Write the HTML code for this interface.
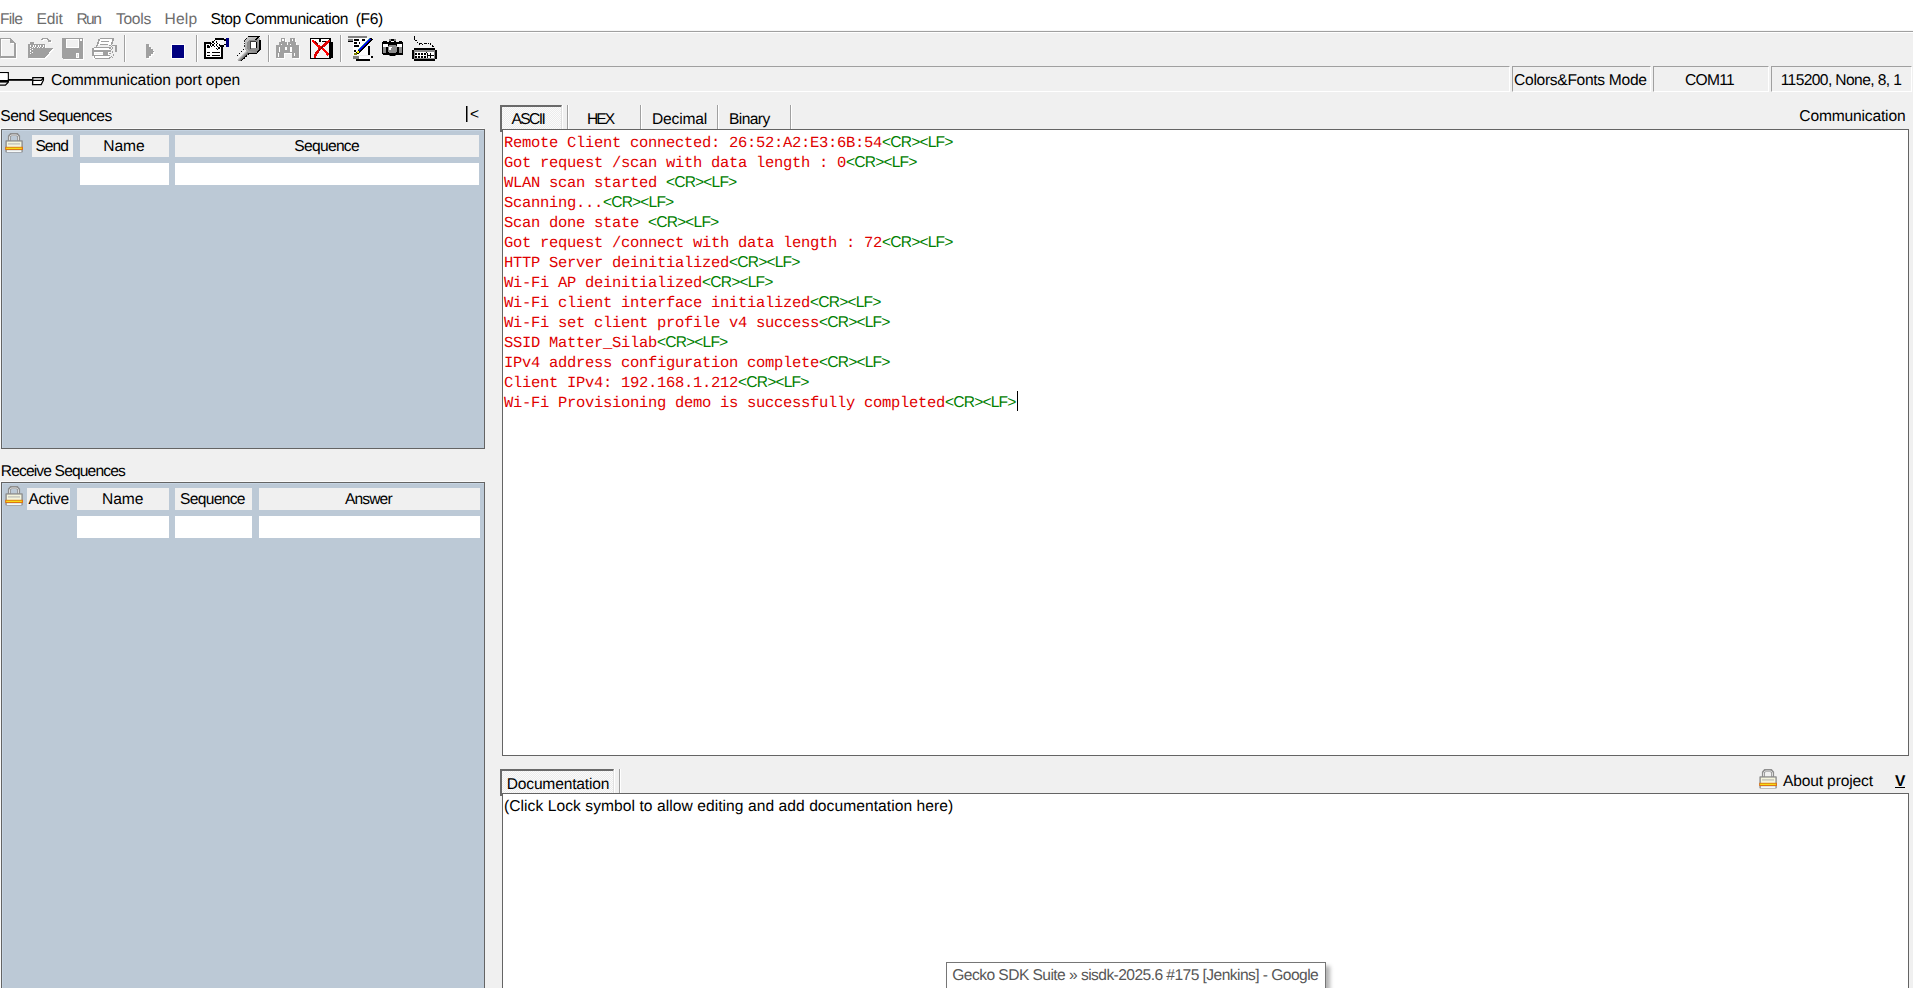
<!DOCTYPE html>
<html><head><meta charset="utf-8">
<style>
html,body{margin:0;padding:0;}
body{width:1913px;height:988px;overflow:hidden;background:#f0f0f0;position:relative;font-family:"Liberation Sans",sans-serif;}
.a{position:absolute;}
.t{position:absolute;white-space:pre;font-size:15.6px;line-height:16px;color:#000;text-rendering:geometricPrecision;}
.box{position:absolute;box-sizing:border-box;}
.mono{position:absolute;left:504px;white-space:pre;font-family:"Liberation Mono",monospace;font-size:15.5px;letter-spacing:-0.3px;line-height:20px;color:#e00000;text-rendering:geometricPrecision;}
.mono span{font-family:"Liberation Sans",sans-serif;font-size:15.6px;letter-spacing:-0.85px;color:#008000;}
</style></head><body>
<div class="a" style="left:0;top:0;width:1913px;height:30px;background:#fff"></div>
<div class="a" style="left:0;top:30px;width:1913px;height:1px;background:#f7f7f7"></div>
<div class="a" style="left:0;top:31px;width:1913px;height:1px;background:#a0a0a0"></div>
<div class="a" style="left:0;top:32px;width:1913px;height:1px;background:#fff"></div>
<svg class="a" style="left:0;top:0" width="450" height="66" shape-rendering="crispEdges"><g transform="translate(1,1)" fill="#fff" stroke="#fff"><path d="M0.6,38.6H10.6L15.1,43.1V57.1H0.6Z" fill="none" stroke-width="1.3"/><path d="M10.3,38.3V43.4H15.4Z" stroke="none"/></g><g fill="#a0a0a0" stroke="#a0a0a0"><path d="M0.6,38.6H10.6L15.1,43.1V57.1H0.6Z" fill="none" stroke-width="1.3"/><path d="M10.3,38.3V43.4H15.4Z" stroke="none"/></g><g transform="translate(1,1)" fill="#fff" stroke="#fff"><path d="M28,44H30.2V42.2H34V44H45V48H53L45.2,57.8H28Z" stroke="none"/><path d="M41.2,40.2L42.8,38.6H47.2L50,41.4" fill="none" stroke-width="1.3"/><path d="M48.2,41.8H51.4V38.8Z" stroke="none"/></g><g fill="#a0a0a0" stroke="#a0a0a0"><path d="M28,44H30.2V42.2H34V44H45V48H53L45.2,57.8H28Z" stroke="none"/><path d="M41.2,40.2L42.8,38.6H47.2L50,41.4" fill="none" stroke-width="1.3"/><path d="M48.2,41.8H51.4V38.8Z" stroke="none"/></g><g fill="#fff"><rect x="30.2" y="45.4" width="1.25" height="1.25"/><rect x="32.7" y="45.4" width="1.25" height="1.25"/><rect x="35.2" y="45.4" width="1.25" height="1.25"/><rect x="37.7" y="45.4" width="1.25" height="1.25"/><rect x="40.2" y="45.4" width="1.25" height="1.25"/><rect x="42.7" y="45.4" width="1.25" height="1.25"/><rect x="31.5" y="46.7" width="1.25" height="1.25"/><rect x="34.0" y="46.7" width="1.25" height="1.25"/><rect x="36.5" y="46.7" width="1.25" height="1.25"/><rect x="39.0" y="46.7" width="1.25" height="1.25"/><rect x="41.5" y="46.7" width="1.25" height="1.25"/><rect x="30.2" y="47.9" width="1.25" height="1.25"/><rect x="30.2" y="50.4" width="1.25" height="1.25"/><rect x="30.2" y="52.9" width="1.25" height="1.25"/><rect x="31.5" y="49.2" width="1.25" height="1.25"/><rect x="31.5" y="51.7" width="1.25" height="1.25"/></g><g transform="translate(1,1)" fill="#fff" stroke="#fff"><path d="M62,38H83V58.8H63.2L62,57.6Z" stroke="none"/></g><g fill="#a0a0a0" stroke="#a0a0a0"><path d="M62,38H83V58.8H63.2L62,57.6Z" stroke="none"/></g><rect x="66.6" y="39.6" width="11.8" height="8" fill="#f0f0f0" stroke="#fff" stroke-width="1.3"/><rect x="80" y="39" width="2" height="2" fill="#fff"/><rect x="76.1" y="52.9" width="3" height="5" fill="#fff"/><rect x="77.4" y="54" width="0.8" height="3" fill="#ddd"/><g fill="#fff"><path d="M99.6,38.6H114.4L112,45.4H96.4Z"/><rect x="93.4" y="47.6" width="16.4" height="11.6"/></g><g fill="#a0a0a0"><rect x="100.1" y="38" width="13.8" height="1.2"/><path d="M98.6,39.2H100.1L97.2,47.2H95.6Z"/><path d="M112.6,39.2H114L112,45H110.6Z"/><rect x="101.1" y="41" width="7.7" height="1"/><rect x="100.1" y="43.9" width="7.7" height="1"/><rect x="92.1" y="47.6" width="1.7" height="8.1"/><rect x="93.8" y="47" width="15.4" height="1.2"/><rect x="93.8" y="50" width="15.4" height="1.7"/><rect x="103" y="51.7" width="4.8" height="3.2"/><rect x="93.8" y="54.9" width="16" height="1"/><rect x="94.1" y="56" width="1" height="2"/><rect x="94.8" y="58" width="15" height="1"/><rect x="109.2" y="44.6" width="1.4" height="1.4"/><rect x="111.8" y="44.6" width="1.4" height="1.4"/><rect x="110.5" y="46" width="1.4" height="1.4"/><rect x="109.2" y="47.4" width="1.4" height="1.4"/><rect x="111.8" y="47.4" width="1.4" height="1.4"/><rect x="110.5" y="48.8" width="1.4" height="1.4"/><rect x="109.2" y="50.2" width="1.4" height="1.4"/><rect x="111.8" y="51.2" width="1.4" height="1.4"/><rect x="109.2" y="53" width="1.4" height="1.4"/><rect x="110.5" y="55.6" width="1.4" height="1.4"/><rect x="109.2" y="57" width="1.4" height="1.4"/><rect x="111.8" y="57" width="1.4" height="1.4"/><rect x="112.6" y="53.6" width="1.4" height="2"/><rect x="115.2" y="45.2" width="1.7" height="6.4"/><rect x="113.4" y="45.2" width="1.8" height="1"/></g><g fill="#f0f0f0"><rect x="94.6" y="52.6" width="8" height="1.6"/></g><rect x="124" y="35" width="1" height="27" fill="#a0a0a0"/><rect x="125" y="35" width="1" height="27" fill="#fff"/><rect x="196" y="35" width="1" height="27" fill="#a0a0a0"/><rect x="197" y="35" width="1" height="27" fill="#fff"/><rect x="268" y="35" width="1" height="27" fill="#a0a0a0"/><rect x="269" y="35" width="1" height="27" fill="#fff"/><rect x="340" y="35" width="1" height="27" fill="#a0a0a0"/><rect x="341" y="35" width="1" height="27" fill="#fff"/><g transform="translate(1,1)" fill="#fff" stroke="#fff"><path d="M146,44H148.5V46.5H151V49H153V50.5H154V52H153V53.5H151V55.5H148.5V58H146Z" stroke="none"/></g><g fill="#a0a0a0" stroke="#a0a0a0"><path d="M146,44H148.5V46.5H151V49H153V50.5H154V52H153V53.5H151V55.5H148.5V58H146Z" stroke="none"/></g><rect x="171" y="44" width="14" height="15" fill="#fff"/><rect x="172" y="45" width="12" height="13" fill="#000080"/><rect x="204" y="42" width="19" height="17" fill="#000"/><rect x="205.9" y="43.9" width="15.2" height="13.2" fill="#fff"/><path d="M215.2,39H224.2V44.6H220.4V42H211.6L213.4,39.4Z" fill="#f8f8f8"/><rect x="211.4" y="42" width="9" height="2" fill="#fff"/><g fill="#000"><rect x="207" y="52" width="3" height="1.3"/><rect x="212" y="52" width="8" height="1.3"/><rect x="207" y="55" width="3" height="1.3"/><rect x="212" y="55" width="8" height="1.3"/><rect x="207" y="45.2" width="2" height="2.6"/><rect x="209" y="46.4" width="1.2" height="1.4"/><rect x="215.2" y="38.2" width="8.6" height="1.3"/><rect x="224.2" y="39.2" width="2" height="1.6"/><rect x="224.2" y="44" width="2" height="1"/><rect x="220.4" y="44.9" width="3.8" height="1.6"/><rect x="214.0" y="39.6" width="1.4" height="1.4"/><rect x="212.4" y="41.2" width="1.4" height="1.4"/><rect x="215.6" y="41.2" width="1.4" height="1.4"/><rect x="211.0" y="42.8" width="1.4" height="1.4"/><rect x="214.0" y="42.8" width="1.4" height="1.4"/><rect x="217.0" y="42.8" width="1.4" height="1.4"/><rect x="209.6" y="44.4" width="1.4" height="1.4"/><rect x="212.4" y="44.4" width="1.4" height="1.4"/><rect x="215.6" y="44.4" width="1.4" height="1.4"/><rect x="218.6" y="44.4" width="1.4" height="1.4"/><rect x="211.0" y="46.0" width="1.4" height="1.4"/><rect x="214.0" y="46.0" width="1.4" height="1.4"/><rect x="217.0" y="46.0" width="1.4" height="1.4"/><rect x="215.6" y="47.6" width="1.4" height="1.4"/><rect x="218.4" y="47.2" width="1.4" height="1.4"/><rect x="216.8" y="48.8" width="1.4" height="1.4"/></g><rect x="226.2" y="38.2" width="2.6" height="8.6" fill="#000080"/><defs><linearGradient id="wg" gradientUnits="userSpaceOnUse" x1="241" y1="50" x2="246" y2="55"><stop offset="0" stop-color="#8a8a8a"/><stop offset="0.5" stop-color="#f8f8f8"/><stop offset="1" stop-color="#6a6a6a"/></linearGradient><linearGradient id="wh" gradientUnits="userSpaceOnUse" x1="246" y1="38" x2="260" y2="53"><stop offset="0" stop-color="#c8c8c8"/><stop offset="0.5" stop-color="#a8a8a8"/><stop offset="1" stop-color="#787878"/></linearGradient></defs><path d="M236.4,59.6L247.4,48.6L251.2,52.4L240.2,61.4Z" fill="url(#wg)"/><path d="M244.8,40.2L248.2,36.8H258.6L260.4,39.2V49.8L256.8,53.6H249.2L244.8,49.2Z" fill="url(#wh)"/><path d="M247.2,42L249.6,39.6H256.8L258.4,41.4V48.8L256,51.2H249.8L247.2,48.6Z" fill="#8c8c8c"/><rect x="251.2" y="41.8" width="4.8" height="6.6" fill="#fff"/><path d="M250.6,48.6V41.6H256.4" fill="none" stroke="#3c3c3c" stroke-width="1.2"/><path d="M256.6,41.8V47.8" fill="none" stroke="#000" stroke-width="1.2"/><path d="M248.2,36.6H258.8L255.4,40.2" fill="none" stroke="#000" stroke-width="1.3"/><path d="M244.6,40.2L248,36.8" fill="none" stroke="#000" stroke-width="0.9" stroke-dasharray="1.2,1"/><path d="M259.9,40V49.8L256.6,53.4H249.4" fill="none" stroke="#000" stroke-width="1.3"/><path d="M244.5,40.4V48" fill="none" stroke="#000" stroke-width="0.8" stroke-dasharray="1.4,1"/><path d="M244,48.8L236.4,56.4" fill="none" stroke="#000" stroke-width="1" stroke-dasharray="1.4,1.4"/><path d="M249.4,53.6L240.8,61" fill="none" stroke="#000" stroke-width="1.3" stroke-dasharray="2,1"/><g transform="translate(1,1)" fill="#fff" stroke="#fff"><path d="M281.1,38.2H284.9V42.2H286.8V45.3H288.2V42.2H290.3V38.2H294.8V42.2H295.8V45.3H298.7V57.7H292.4V52.8H283.7V57.7H276.1V45.3H279.1V42.2H281.1Z" stroke="none"/></g><g fill="#a0a0a0" stroke="#a0a0a0"><path d="M281.1,38.2H284.9V42.2H286.8V45.3H288.2V42.2H290.3V38.2H294.8V42.2H295.8V45.3H298.7V57.7H292.4V52.8H283.7V57.7H276.1V45.3H279.1V42.2H281.1Z" stroke="none"/></g><g fill="#fff"><rect x="282.4" y="39.4" width="1.4" height="1.6"/><rect x="291.6" y="39.4" width="1.6" height="1.6"/><rect x="278.6" y="47.2" width="1.6" height="4.6"/><rect x="285" y="47" width="1.6" height="2.8"/><rect x="290" y="47.2" width="1.6" height="4.6"/><rect x="277.8" y="53.4" width="1.2" height="3.6"/><rect x="293.6" y="53.4" width="1.6" height="2.4"/><rect x="280.8" y="43.6" width="1.2" height="1.2"/><rect x="289.6" y="43.6" width="1.4" height="1"/></g><rect x="310.6" y="38.8" width="19.4" height="19.4" fill="#f4f4f4" stroke="#000" stroke-width="1.3"/><rect x="330.4" y="42.4" width="2.4" height="15.4" fill="#000"/><rect x="311.4" y="39.4" width="18" height="3" fill="#fff"/><rect x="319.2" y="38.8" width="1.4" height="3" fill="#000"/><rect x="322.2" y="40.8" width="5" height="1.6" fill="#000"/><path d="M312.2,40.2L319.6,47.2L321.6,47.4L326.4,52.6L328.6,55.4" fill="none" stroke="#f00" stroke-width="2.4"/><path d="M329.8,40.4L323.4,45.8L320,48.4L317.6,51.6L315.4,54.6L315,58" fill="none" stroke="#e00000" stroke-width="2.6"/><path d="M314.6,41.6L318.2,44.6M321,48.4L323,46.4M318.6,50.4L320,49.2" fill="none" stroke="#800000" stroke-width="1.4"/><rect x="348" y="36.3" width="18.8" height="1.6" fill="#808080"/><rect x="348" y="39" width="4.8" height="1.6" fill="#808080"/><rect x="348" y="40.5" width="4.8" height="1.3" fill="#000"/><path d="M352.8,37.9H367.2L369.6,40V55.3H352.8Z" fill="#fff"/><rect x="368.1" y="46" width="1.5" height="9.3" fill="#000"/><g fill="#000"><rect x="354" y="39" width="4.8" height="1.5"/><rect x="362" y="39" width="3" height="1.5"/><rect x="354" y="42.3" width="3" height="1.5"/><rect x="359.2" y="42.3" width="0.9" height="1.5"/><rect x="354" y="45.3" width="4.8" height="1.5"/><rect x="354" y="50.3" width="2" height="1.5"/></g><path d="M357.2,53.4L371.8,38.8" stroke="#000" stroke-width="2.4"/><path d="M358.6,50.6L370.2,39" stroke="#0000ff" stroke-width="1.5"/><path d="M358.2,49.8L369.4,38.4" stroke="#008080" stroke-width="0.8"/><rect x="354" y="52.6" width="2.6" height="2" fill="#808000"/><rect x="356.6" y="51" width="2.2" height="2" fill="#ffff00"/><rect x="356.6" y="53" width="1.6" height="1.4" fill="#000"/><rect x="353" y="56.3" width="6" height="2.3" fill="#808080"/><rect x="359" y="56.3" width="11.6" height="2.3" fill="#fff"/><rect x="370.6" y="55.6" width="2.6" height="2.6" fill="#000"/><rect x="356" y="59.1" width="14.1" height="1.7" fill="#000"/><path d="M382.4,42.4L383.2,41H386.2L387,42.2H388.6L389,41.2V39H396V41.2L396.4,42.2H398.4L399.2,41H402L403,42.4V54L402,55H396V56H389V55H383.2L382.4,54Z" fill="#000"/><rect x="389" y="39" width="1.6" height="1.6" fill="#808080"/><rect x="394.4" y="39" width="1.6" height="1.6" fill="#808080"/><rect x="390.8" y="41.1" width="3.4" height="1" fill="#fff"/><rect x="383.2" y="44" width="4.8" height="3" fill="#fff"/><rect x="397.2" y="44" width="4.8" height="3" fill="#fff"/><rect x="383.2" y="47" width="2.8" height="5.8" fill="#8c8c8c"/><rect x="399.2" y="47" width="2.8" height="5.8" fill="#8c8c8c"/><path d="M389,45H396L397,46.4V51.6L396,52.8H389L388,51.6V46.4Z" fill="#8c8c8c"/><path d="M389.2,47H392V47.9H391.2V49.9H389.2Z" fill="#fff"/><rect x="389" y="55.2" width="1.4" height="0.8" fill="#808080"/><rect x="394.6" y="55.2" width="1.4" height="0.8" fill="#808080"/><path d="M414.6,36.2V38.6L415.6,40.2L418.4,43.4L419.6,44.2L421,43.2L422.6,44.2L424.2,43.2L425.8,44.2L427.4,43.2L428.8,43.2L430.2,43.4L433.4,46.4L432,48" fill="none" stroke="#000" stroke-width="1.2" stroke-dasharray="1.4,0.8"/><rect x="414.2" y="48.1" width="20.7" height="1.7" fill="#000"/><rect x="412" y="50" width="2.1" height="8.9" fill="#000"/><rect x="435" y="50" width="2" height="8.9" fill="#000"/><rect x="414.2" y="59.1" width="20.7" height="1.8" fill="#000"/><rect x="414.2" y="49.8" width="20.7" height="9.3" fill="#8c8c8c"/><rect x="414.8" y="51.8" width="19.6" height="6.6" fill="#fff"/><g fill="#000"><rect x="415" y="52.8" width="2" height="2.2"/><rect x="418" y="52.8" width="2" height="2.2"/><rect x="421" y="52.8" width="2" height="2.2"/><rect x="424" y="52.8" width="2" height="2.2"/><rect x="415" y="55.9" width="2" height="2.2"/><rect x="418" y="55.9" width="2" height="2.2"/><rect x="421" y="55.9" width="2" height="2.2"/><rect x="424" y="55.9" width="2" height="2.2"/><rect x="427.4" y="52.8" width="0.9" height="5.3"/><rect x="430.4" y="52.8" width="0.9" height="5.3"/><rect x="426.6" y="55.2" width="7.6" height="0.8"/><rect x="426" y="51.8" width="1.4" height="1"/></g></svg>
<div class="box" style="left:-1px;top:66px;width:1511px;height:26px;border-top:1px solid #a0a0a0;border-left:1px solid #a0a0a0;border-right:1px solid #fff;border-bottom:1px solid #fff"></div><div class="box" style="left:1512px;top:66px;width:139px;height:26px;border-top:1px solid #a0a0a0;border-left:1px solid #a0a0a0;border-right:1px solid #fff;border-bottom:1px solid #fff"></div><div class="box" style="left:1653px;top:66px;width:116px;height:26px;border-top:1px solid #a0a0a0;border-left:1px solid #a0a0a0;border-right:1px solid #fff;border-bottom:1px solid #fff"></div><div class="box" style="left:1771px;top:66px;width:141px;height:26px;border-top:1px solid #a0a0a0;border-left:1px solid #a0a0a0;border-right:1px solid #fff;border-bottom:1px solid #fff"></div>
<svg class="a" style="left:0;top:68px" width="46" height="22"><path d="M-2,4.6H8.2V14.6" fill="#fff" stroke="#000" stroke-width="1.4"/><rect x="-2" y="5.2" width="9.6" height="6.6" fill="#fff"/><rect x="-2" y="12" width="10.6" height="2.6" fill="#000"/><path d="M-2,17.2H5.4L8.2,14.4" fill="none" stroke="#000" stroke-width="1.3"/><rect x="8" y="11" width="24" height="1.8" fill="#000"/><path d="M32.8,9.6H43.4V12.2L41.2,16.6H32.6Z" fill="#fff" stroke="#000" stroke-width="1.3"/><path d="M32.6,12.4H41.2L43.4,10" fill="none" stroke="#000" stroke-width="1.3"/></svg>
<div class="box" style="left:1px;top:129px;width:484px;height:320px;background:#bcc9d6;border:1px solid #646464;box-shadow:-1px -1px 0 #fafafa, inset 1px 1px 0 #c6d4e2"></div>
<div class="a" style="left:32px;top:135px;width:41px;height:22px;background:#f0f0f0"></div>
<div class="a" style="left:80px;top:135px;width:89px;height:22px;background:#f0f0f0"></div>
<div class="a" style="left:175px;top:135px;width:304px;height:22px;background:#f0f0f0"></div>
<div class="a" style="left:80px;top:163px;width:89px;height:22px;background:#fff"></div>
<div class="a" style="left:175px;top:163px;width:304px;height:22px;background:#fff"></div>
<svg class="a" style="left:5px;top:133px" width="19" height="21"><path d="M4.4,8V3.4L6,1.5H12L13.6,3.4V8" fill="none" stroke="#8e8e8e" stroke-width="3"/><path d="M4.6,7.6V3.6L6.2,2H11.8L13.4,3.6V7.6" fill="none" stroke="#e6e6e6" stroke-width="1"/><rect x="0.4" y="7.2" width="17.4" height="12.4" rx="0.8" fill="#8e8e8e"/><rect x="1.8" y="8.6" width="14.6" height="5.6" fill="#f4f4dc"/><rect x="3" y="10.2" width="12" height="1.4" fill="#c4c4bc"/><rect x="0.2" y="13.8" width="17.8" height="3.2" fill="#dc7414"/><rect x="1.2" y="14.7" width="15.6" height="1.3" fill="#f4dc18"/><rect x="1.8" y="17.2" width="14.6" height="1.8" fill="#f6f8f8"/></svg>
<div class="box" style="left:1px;top:482px;width:484px;height:520px;background:#bcc9d6;border:1px solid #646464;box-shadow:-1px -1px 0 #fafafa, inset 1px 1px 0 #c6d4e2"></div>
<div class="a" style="left:27px;top:488px;width:43px;height:22px;background:#f0f0f0"></div>
<div class="a" style="left:77px;top:488px;width:92px;height:22px;background:#f0f0f0"></div>
<div class="a" style="left:175px;top:488px;width:77px;height:22px;background:#f0f0f0"></div>
<div class="a" style="left:259px;top:488px;width:221px;height:22px;background:#f0f0f0"></div>
<div class="a" style="left:77px;top:516px;width:92px;height:22px;background:#fff"></div>
<div class="a" style="left:175px;top:516px;width:77px;height:22px;background:#fff"></div>
<div class="a" style="left:259px;top:516px;width:221px;height:22px;background:#fff"></div>
<svg class="a" style="left:5px;top:486px" width="19" height="21"><path d="M4.4,8V3.4L6,1.5H12L13.6,3.4V8" fill="none" stroke="#8e8e8e" stroke-width="3"/><path d="M4.6,7.6V3.6L6.2,2H11.8L13.4,3.6V7.6" fill="none" stroke="#e6e6e6" stroke-width="1"/><rect x="0.4" y="7.2" width="17.4" height="12.4" rx="0.8" fill="#8e8e8e"/><rect x="1.8" y="8.6" width="14.6" height="5.6" fill="#f4f4dc"/><rect x="3" y="10.2" width="12" height="1.4" fill="#c4c4bc"/><rect x="0.2" y="13.8" width="17.8" height="3.2" fill="#dc7414"/><rect x="1.2" y="14.7" width="15.6" height="1.3" fill="#f4dc18"/><rect x="1.8" y="17.2" width="14.6" height="1.8" fill="#f6f8f8"/></svg>
<div class="box" style="left:500px;top:105px;width:62px;height:27px;background:repeating-conic-gradient(#fbfbfb 0 25%,#ececec 0 50%) 0 0/2px 2px;border-top:2px solid #6a6a6a;border-left:2px solid #6a6a6a;border-right:1px solid #e0e0e0;box-shadow:1px 0 0 #fff"></div>
<div class="a" style="left:567px;top:105px;width:1px;height:24px;background:#a0a0a0"></div><div class="a" style="left:568px;top:105px;width:1px;height:24px;background:#fff"></div>
<div class="a" style="left:640px;top:105px;width:1px;height:24px;background:#a0a0a0"></div><div class="a" style="left:641px;top:105px;width:1px;height:24px;background:#fff"></div>
<div class="a" style="left:717px;top:105px;width:1px;height:24px;background:#a0a0a0"></div><div class="a" style="left:718px;top:105px;width:1px;height:24px;background:#fff"></div>
<div class="a" style="left:790px;top:105px;width:1px;height:24px;background:#a0a0a0"></div><div class="a" style="left:791px;top:105px;width:1px;height:24px;background:#fff"></div>
<div class="box" style="left:502px;top:129px;width:1407px;height:627px;background:#fff;border:1px solid #646464"></div>
<div class="mono" style="top:133px">Remote Client connected: 26:52:A2:E3:6B:54<span>&lt;CR&gt;&lt;LF&gt;</span></div>
<div class="mono" style="top:153px">Got request /scan with data length : 0<span>&lt;CR&gt;&lt;LF&gt;</span></div>
<div class="mono" style="top:173px">WLAN scan started <span>&lt;CR&gt;&lt;LF&gt;</span></div>
<div class="mono" style="top:193px">Scanning...<span>&lt;CR&gt;&lt;LF&gt;</span></div>
<div class="mono" style="top:213px">Scan done state <span>&lt;CR&gt;&lt;LF&gt;</span></div>
<div class="mono" style="top:233px">Got request /connect with data length : 72<span>&lt;CR&gt;&lt;LF&gt;</span></div>
<div class="mono" style="top:253px">HTTP Server deinitialized<span>&lt;CR&gt;&lt;LF&gt;</span></div>
<div class="mono" style="top:273px">Wi-Fi AP deinitialized<span>&lt;CR&gt;&lt;LF&gt;</span></div>
<div class="mono" style="top:293px">Wi-Fi client interface initialized<span>&lt;CR&gt;&lt;LF&gt;</span></div>
<div class="mono" style="top:313px">Wi-Fi set client profile v4 success<span>&lt;CR&gt;&lt;LF&gt;</span></div>
<div class="mono" style="top:333px">SSID Matter_Silab<span>&lt;CR&gt;&lt;LF&gt;</span></div>
<div class="mono" style="top:353px">IPv4 address configuration complete<span>&lt;CR&gt;&lt;LF&gt;</span></div>
<div class="mono" style="top:373px">Client IPv4: 192.168.1.212<span>&lt;CR&gt;&lt;LF&gt;</span></div>
<div class="mono" style="top:393px">Wi-Fi Provisioning demo is successfully completed<span>&lt;CR&gt;&lt;LF&gt;</span></div>
<div class="a" style="left:1017px;top:391px;width:1px;height:20px;background:#000"></div>
<div class="box" style="left:500px;top:769px;width:114px;height:27px;background:repeating-conic-gradient(#fbfbfb 0 25%,#ececec 0 50%) 0 0/2px 2px;border-top:2px solid #6a6a6a;border-left:2px solid #6a6a6a;border-right:1px solid #e0e0e0;box-shadow:1px 0 0 #fff"></div>
<div class="a" style="left:619px;top:769px;width:1px;height:24px;background:#a0a0a0"></div><div class="a" style="left:620px;top:769px;width:1px;height:24px;background:#fff"></div>
<svg class="a" style="left:1759px;top:769px" width="19" height="21"><path d="M4.4,8V3.4L6,1.5H12L13.6,3.4V8" fill="none" stroke="#8e8e8e" stroke-width="3"/><path d="M4.6,7.6V3.6L6.2,2H11.8L13.4,3.6V7.6" fill="none" stroke="#e6e6e6" stroke-width="1"/><rect x="0.4" y="7.2" width="17.4" height="12.4" rx="0.8" fill="#8e8e8e"/><rect x="1.8" y="8.6" width="14.6" height="5.6" fill="#f4f4dc"/><rect x="3" y="10.2" width="12" height="1.4" fill="#c4c4bc"/><rect x="0.2" y="13.8" width="17.8" height="3.2" fill="#dc7414"/><rect x="1.2" y="14.7" width="15.6" height="1.3" fill="#f4dc18"/><rect x="1.8" y="17.2" width="14.6" height="1.8" fill="#f6f8f8"/></svg>
<div class="t" style="left:1895px;top:774px;font-weight:bold">V</div>
<div class="a" style="left:466px;top:106px;width:1px;height:16px;background:#000"></div><div class="a" style="left:467px;top:106px;width:1px;height:16px;background:#7a7a7a"></div>
<div class="a" style="left:1895px;top:787px;width:10px;height:1px;background:#000"></div>
<div class="box" style="left:502px;top:793px;width:1407px;height:220px;background:#fff;border:1px solid #646464"></div>
<div class="box" style="left:946px;top:962px;width:380px;height:40px;background:#fff;border:1px solid #767676;box-shadow:4px 4px 4px rgba(0,0,0,0.3)"></div>
<div class="t" style="left:0.0px;top:12px;letter-spacing:-0.73px;color:#6d6d6d">File</div>
<div class="t" style="left:36.6px;top:12px;letter-spacing:-0.23px;color:#6d6d6d">Edit</div>
<div class="t" style="left:76.5px;top:12px;letter-spacing:-1.65px;color:#6d6d6d">Run</div>
<div class="t" style="left:116.0px;top:12px;letter-spacing:-0.30px;color:#6d6d6d">Tools</div>
<div class="t" style="left:164.6px;top:12px;letter-spacing:0.13px;color:#6d6d6d">Help</div>
<div class="t" style="left:210.4px;top:12px;letter-spacing:-0.40px;">Stop Communication  (F6)</div>
<div class="t" style="left:51.0px;top:73px;letter-spacing:-0.10px;">Commmunication port open</div>
<div class="t" style="left:1514.1px;top:73px;letter-spacing:-0.31px;">Colors&amp;Fonts Mode</div>
<div class="t" style="left:1685.0px;top:73px;letter-spacing:-0.75px;">COM11</div>
<div class="t" style="left:1780.7px;top:73px;letter-spacing:-0.61px;">115200, None, 8, 1</div>
<div class="t" style="left:0.3px;top:109px;letter-spacing:-0.52px;">Send Sequences</div>
<div class="t" style="left:470.0px;top:107px;letter-spacing:-2.10px;">&lt;</div>
<div class="t" style="left:35.4px;top:139px;letter-spacing:-0.97px;">Send</div>
<div class="t" style="left:103.2px;top:139px;letter-spacing:-0.07px;">Name</div>
<div class="t" style="left:294.3px;top:139px;letter-spacing:-0.70px;">Sequence</div>
<div class="t" style="left:0.8px;top:464px;letter-spacing:-0.86px;">Receive Sequences</div>
<div class="t" style="left:28.4px;top:492px;letter-spacing:-0.36px;">Active</div>
<div class="t" style="left:102.0px;top:492px;letter-spacing:-0.07px;">Name</div>
<div class="t" style="left:180.1px;top:492px;letter-spacing:-0.70px;">Sequence</div>
<div class="t" style="left:345.0px;top:492px;letter-spacing:-0.88px;">Answer</div>
<div class="t" style="left:511.5px;top:112px;letter-spacing:-1.62px;">ASCII</div>
<div class="t" style="left:587.0px;top:112px;letter-spacing:-2.00px;">HEX</div>
<div class="t" style="left:652.0px;top:112px;letter-spacing:-0.18px;">Decimal</div>
<div class="t" style="left:729.0px;top:112px;letter-spacing:-0.60px;">Binary</div>
<div class="t" style="left:1799.3px;top:109px;letter-spacing:-0.17px;">Communication</div>
<div class="t" style="left:506.7px;top:777px;letter-spacing:-0.18px;">Documentation</div>
<div class="t" style="left:1783.0px;top:774px;letter-spacing:-0.16px;">About project</div>
<div class="t" style="left:504.0px;top:799px;letter-spacing:0.06px;">(Click Lock symbol to allow editing and add documentation here)</div>
<div class="t" style="left:952.3px;top:968px;letter-spacing:-0.56px;color:#575757">Gecko SDK Suite » sisdk-2025.6 #175 [Jenkins] - Google</div>
</body></html>
